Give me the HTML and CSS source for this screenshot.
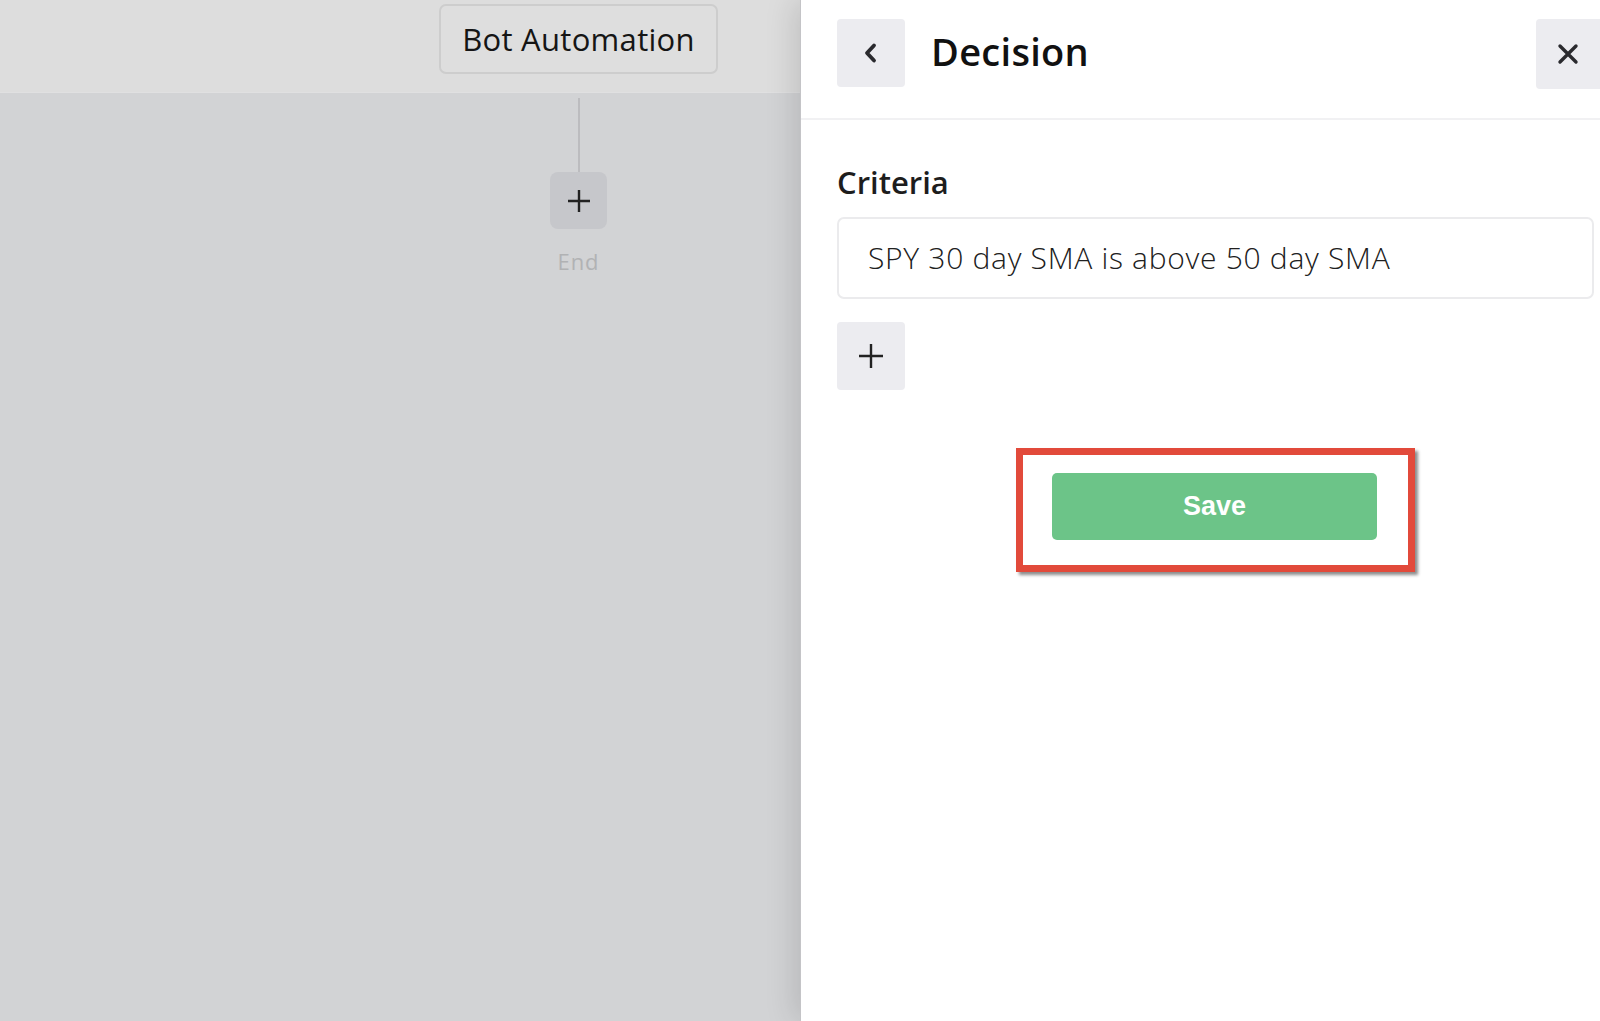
FILE: index.html
```html
<!DOCTYPE html>
<html lang="en">
<head>
    <title>Decision</title>
    <link rel="stylesheet" href="styles.css">
</head>
<body>
    <div class="canvas">
        <div class="canvas-top">
            <div class="node-col">
                <div class="bot-box">Bot Automation</div>
            </div>
        </div>
        <div class="node-col">
            <div class="connector"></div>
            <button class="add-node">
                <svg width="26" height="26" viewBox="0 0 26 26"><path d="M13 2v22M2 13h22" stroke="#222" stroke-width="2.4" fill="none"/></svg>
            </button>
            <div class="end-label">End</div>
        </div>
    </div>

    <div class="panel">
        <div class="panel-head">
            <button class="icon-btn">
                <svg width="22" height="22" viewBox="0 0 22 22"><path d="M14 3.5L7 11l7 7.5" stroke="#2a2a2e" stroke-width="3.8" fill="none" stroke-linecap="round" stroke-linejoin="round"/></svg>
            </button>
            <h1 class="title">Decision</h1>
            <button class="icon-btn close-btn">
                <svg width="22" height="22" viewBox="0 0 22 22"><path d="M3 3l16 16M19 3L3 19" stroke="#2a2a2e" stroke-width="3.4" fill="none" stroke-linecap="round"/></svg>
            </button>
        </div>
        <div class="panel-body">
            <h2 class="label">Criteria</h2>
            <div class="criteria-input">SPY 30 day SMA is above 50 day SMA</div>
            <button class="icon-btn add-btn">
                <svg width="28" height="28" viewBox="0 0 28 28"><path d="M14 2v24M2 14h24" stroke="#222" stroke-width="2.4" fill="none"/></svg>
            </button>
            <div class="save-row">
                <div class="highlight">
                    <button class="save-btn">Save</button>
                </div>
            </div>
        </div>
    </div>
</body>
</html>
```

FILE: styles.css
```css
body {
    margin: 0;
    display: flex;
    height: 1021px;
    overflow: hidden;
    font-family: "Open Sans", "Noto Sans", sans-serif;
    color: #1b1b1b;
}
button {
    border: none;
    padding: 0;
    font-family: inherit;
    cursor: pointer;
}
.canvas {
    width: 800px;
    flex-shrink: 0;
    background-color: #d2d3d5;
}
.canvas-top {
    height: 92px;
    background-color: #dddddd;
    border-bottom: 1px solid #e0e0e1;
}
.node-col {
    width: 279px;
    margin-left: 439px;
    display: flex;
    flex-direction: column;
    align-items: center;
}
.bot-box {
    box-sizing: border-box;
    width: 279px;
    height: 70px;
    margin-top: 4px;
    border: 2px solid #cdcdcd;
    border-radius: 7px;
    background-color: #dedede;
    font-size: 31px;
    letter-spacing: 0.3px;
    line-height: 66px;
    text-align: center;
    color: #151515;
}
.connector {
    width: 2px;
    height: 74px;
    margin-top: 5px;
    background-color: #bcbcbf;
}
.add-node {
    width: 57px;
    height: 57px;
    border-radius: 8px;
    background-color: #c6c7cb;
    display: flex;
    align-items: center;
    justify-content: center;
}
.end-label {
    margin-top: 17px;
    font-size: 22px;
    letter-spacing: 1px;
    color: #b1b2b4;
}
.panel {
    flex: 1;
    background-color: #fff;
    box-shadow: -6px 0 28px rgba(0, 0, 0, 0.13);
    border-left: 1px solid #c4c4c7;
}
.panel-head {
    height: 118px;
    border-bottom: 2px solid #f1f1f3;
    display: flex;
    align-items: flex-start;
    padding-left: 36px;
}
.icon-btn {
    width: 68px;
    height: 68px;
    border-radius: 4px;
    background-color: #ececf0;
    display: flex;
    align-items: center;
    justify-content: center;
}
.panel-head .icon-btn {
    margin-top: 19px;
}
.title {
    margin: 0 0 0 26px;
    font-size: 38px;
    font-weight: 600;
    letter-spacing: 0.3px;
    line-height: 102px;
    color: #111;
}
.close-btn {
    margin-left: auto;
    width: 64px;
    height: 70px;
    border-radius: 4px 0 0 4px;
}
.panel-body {
    padding: 0 6px 0 36px;
}
.label {
    margin: 40px 0 0;
    font-size: 31px;
    font-weight: 600;
    line-height: 44px;
    color: #1d1d1d;
}
.criteria-input {
    box-sizing: border-box;
    height: 82px;
    margin-top: 13px;
    padding-left: 29px;
    border: 2px solid #ebebed;
    border-radius: 7px;
    font-size: 30px;
    font-weight: 300;
    letter-spacing: 0.7px;
    line-height: 78px;
    color: #202020;
}
.add-btn {
    margin-top: 23px;
}
.save-row {
    display: flex;
    justify-content: center;
    margin-top: 58px;
}
.highlight {
    border: 7px solid #e24a3b;
    padding: 18px 31px 25px 29px;
    background-color: #fff;
    box-shadow: 3px 3px 3px rgba(0, 0, 0, 0.45);
}
.save-btn {
    display: block;
    width: 325px;
    height: 67px;
    border-radius: 5px;
    background-color: #6cc488;
    color: #fff;
    font-family: "Liberation Sans", Arial, sans-serif;
    font-size: 27px;
    font-weight: bold;
}
```
